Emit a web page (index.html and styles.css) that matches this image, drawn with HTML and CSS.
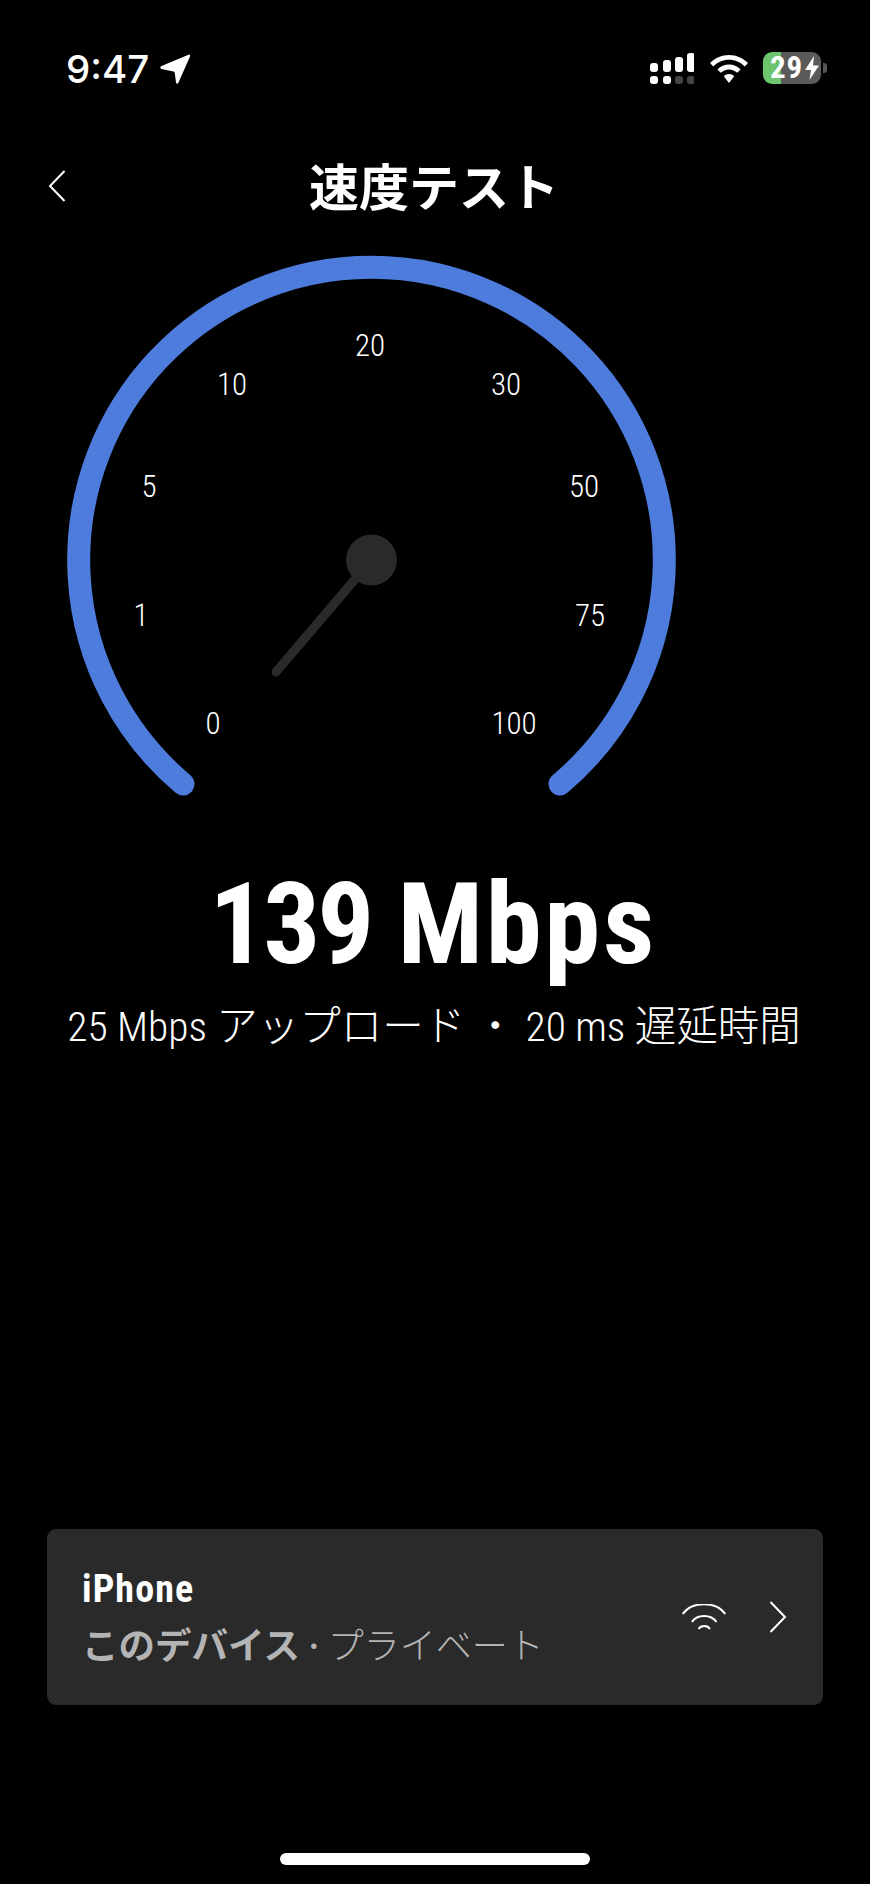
FILE: index.html
```html
<!DOCTYPE html>
<html lang="ja">
<head>
<meta charset="utf-8">
<title>速度テスト</title>
<link rel="stylesheet" href="styles.css">
</head>
<body>
<main class="page">
  <div class="status">
    <div class="status-left">
      <span class="time">9:47</span>
      <svg class="loc" viewBox="0 0 30 30"><path d="M28.5 0.7 L1.5 12 Q-1 13.5 1.5 15 L13.5 17.5 Q14.5 17.8 14.8 19 L16 28.5 Q17 31 18.5 28.5 L30 2.5 Q30.5 0 28.5 0.7 Z"/></svg>
    </div>
    <div class="status-right">
      <svg class="signal" viewBox="0 0 44 32">
        <rect class="on" x="0" y="10" width="8" height="9" rx="3"/>
        <rect class="on" x="13" y="7" width="8" height="12" rx="3"/>
        <rect class="on" x="25" y="4" width="8" height="15" rx="3"/>
        <rect class="on" x="37" y="0" width="8" height="19" rx="3"/>
        <rect class="on" x="0" y="23" width="8" height="8" rx="3"/>
        <rect class="on" x="13" y="23" width="8" height="8" rx="3"/>
        <rect class="off" x="25" y="23" width="8" height="8" rx="3"/>
        <rect class="off" x="37" y="23" width="8" height="8" rx="3"/>
      </svg>
      <svg class="wifi-solid" viewBox="0 0 38 28">
        <path d="M19 0 C11.5 0 5 3 0 8 L3.3 11.4 C7.5 7.3 13 4.8 19 4.8 C25 4.8 30.5 7.3 34.7 11.4 L38 8 C33 3 26.5 0 19 0 Z"/>
        <path d="M19 9.6 C14.6 9.6 10.6 11.3 7.4 14.4 L10.8 17.8 C13 15.7 15.9 14.4 19 14.4 C22.1 14.4 25 15.7 27.2 17.8 L30.6 14.4 C27.4 11.3 23.4 9.6 19 9.6 Z"/>
        <path d="M19 19 C17 19 15.2 19.8 13.8 21.2 L19 28 L24.2 21.2 C22.8 19.8 21 19 19 19 Z"/>
      </svg>
      <div class="battery">
        <div class="batt-body">
          <span class="batt-num">29</span>
          <svg class="bolt" viewBox="0 0 14 24"><path d="M9 0 L0 14 H6 L4.5 24 L14 9.5 H8 Z"/></svg>
        </div>
        <span class="batt-cap"></span>
      </div>
    </div>
  </div>

  <header class="nav">
    <svg class="back" viewBox="0 0 18 32"><path d="M16.5 1 L2 16 L16.5 31"/></svg>
    <h1 class="title">速度テスト</h1>
  </header>

  <svg class="gauge" viewBox="0 240 870 580">
    <path class="arc" d="M183 784 A292.8 292.8 0 1 1 560 784"/>
    <text class="tick" x="370" y="356">20</text>
    <text class="tick" x="232" y="395">10</text>
    <text class="tick" x="506" y="395">30</text>
    <text class="tick" x="149" y="497">5</text>
    <text class="tick" x="584" y="497">50</text>
    <text class="tick" x="141" y="626">1</text>
    <text class="tick" x="590" y="626">75</text>
    <text class="tick" x="213" y="734">0</text>
    <text class="tick" x="514" y="734">100</text>
    <line class="needle" x1="276" y1="672" x2="371.5" y2="560"/>
    <circle class="hub" cx="371.5" cy="560" r="25.5"/>
  </svg>

  <div class="speed"><span class="num">139</span> <span class="unit">Mbps</span></div>
  <div class="sub">25 Mbps アップロード ・ 20 ms 遅延時間</div>

  <div class="spacer"></div>

  <section class="card">
    <div class="card-text">
      <div class="device">iPhone</div>
      <div class="meta"><b>このデバイス</b><span class="dot"> · </span>プライベート</div>
    </div>
    <svg class="wifi-line" viewBox="0 0 44 26">
      <path d="M0.7 10 C10 -3 34 -3 43.3 10"/>
      <path d="M10 18 C15 10 29 10 34.5 18"/>
      <path d="M16.5 25 C19 21 25.5 21 28 25"/>
    </svg>
    <svg class="chev" viewBox="0 0 18 32"><path d="M1.5 1 L16 16 L1.5 31"/></svg>
  </section>

  <div class="home-wrap"><div class="home"></div></div>
</main>
</body>
</html>
```
FILE: styles.css
```css
* { box-sizing: border-box; }
html, body { margin: 0; padding: 0; background: #000; }
body {
  color: #fff;
  font-family: "Roboto", "Noto Sans CJK JP", sans-serif;
  font-stretch: 75%;
}
.page {
  width: 870px;
  height: 1884px;
  display: flex;
  flex-direction: column;
  overflow: hidden;
}
.status {
  height: 90px;
  padding: 51px 43px 0 66px;
  display: flex;
  justify-content: space-between;
  align-items: flex-start;
}
.status-left { display: flex; align-items: center; gap: 11px; }
.time {
  font-family: "Inter", sans-serif;
  font-stretch: 100%;
  font-weight: 500;
  font-size: 38.5px;
  line-height: 36px;
}
.loc { width: 30px; height: 30px; fill: #fff; }
.status-right { display: flex; align-items: flex-start; }
.signal { width: 44px; height: 32px; margin-top: 2px; }
.signal .on { fill: #fff; }
.signal .off { fill: #444; }
.wifi-solid { width: 38px; height: 28px; fill: #fff; margin: 4px 15px 0 16px; }
.battery { display: flex; align-items: center; gap: 2px; margin-top: 1px; }
.batt-body {
  width: 58px;
  height: 32px;
  background: linear-gradient(90deg, #6cc46c 18px, #5a5a5a 18px);
  border-radius: 9px;
  display: flex;
  align-items: center;
  padding-left: 7px;
}
.batt-num {
  font-weight: 700;
  font-size: 31px;
  line-height: 28px;
  letter-spacing: 0.8px;
}
.bolt { width: 14px; height: 24px; fill: #fff; margin-left: 2px; }
.batt-cap { width: 4px; height: 10px; background: #555; border-radius: 0 3px 3px 0; }

.nav {
  height: 70px;
  margin-top: 59px;
  position: relative;
  display: flex;
  align-items: center;
  justify-content: center;
}
.back { position: absolute; left: 48px; top: 21px; width: 18px; height: 32px; fill: none; stroke: #fff; stroke-width: 2; }
.title {
  margin: 0;
  font-family: "Noto Sans CJK JP", sans-serif;
  font-weight: 700;
  font-size: 50px;
  line-height: 70px;
  padding-right: 2px;
}
.gauge { display: block; width: 870px; height: 580px; margin-top: 21px; flex: none; }
.arc { fill: none; stroke: #4e7cdc; stroke-width: 23; stroke-linecap: round; }
.tick { fill: #fff; font-size: 31px; font-weight: 350; text-anchor: middle; }
.needle { stroke: #2a2a2a; stroke-width: 9; stroke-linecap: round; }
.hub { fill: #2a2a2a; }
.speed {
  margin-top: 45px;
  padding-right: 4px;
  text-align: center;
  font-weight: 700;
  font-size: 113px;
  line-height: 120px;
}
.num { letter-spacing: -3px; }
.unit { letter-spacing: 2.6px; }
.sub {
  margin-top: 17px;
  padding-right: 2px;
  text-align: center;
  font-size: 41.5px;
  line-height: 50px;
  font-weight: 300;
}
.spacer { flex: 1; }
.card {
  margin: 0 47px;
  height: 176px;
  background: #2a2a2a;
  border-radius: 9px;
  display: flex;
  align-items: center;
  padding: 0 36px;
}
.card-text { flex: 1; margin-left: -1px; padding-top: 4px; }
.device { font-weight: 700; font-size: 38px; line-height: 44px; letter-spacing: 1.1px; margin-top: -2px; }
.meta {
  margin-top: 9px;
  color: #b4b4b4;
  font-family: "Noto Sans CJK JP", sans-serif;
  font-size: 36px;
  line-height: 46px;
  font-weight: 300;
}
.meta b { font-size: 36.5px; font-weight: 700; }
.dot { font-family: "Roboto", sans-serif; font-weight: 700; margin: 0 0.5px; }
.wifi-line { width: 44px; height: 26px; fill: none; stroke: #fff; stroke-width: 2; margin-right: 43px; }
.chev { width: 18px; height: 32px; fill: none; stroke: #fff; stroke-width: 2; }
.home-wrap { height: 179px; display: flex; justify-content: center; padding-top: 148px; flex: none; }
.home { width: 310px; height: 12px; border-radius: 6px; background: #fff; }
```
